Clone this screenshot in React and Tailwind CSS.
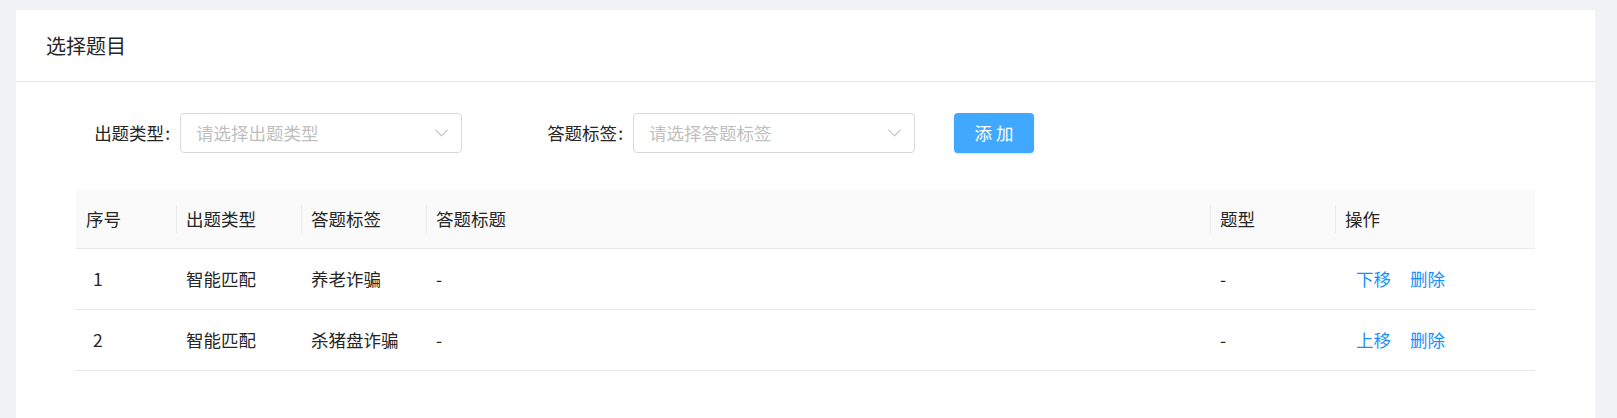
import React from "react";

const font = { fontFamily: '"Noto Sans CJK SC", "Noto Sans", sans-serif' };

const rows = [
  { no: "1", type: "智能匹配", tag: "养老诈骗", title: "-", kind: "-", move: "下移" },
  { no: "2", type: "智能匹配", tag: "杀猪盘诈骗", title: "-", kind: "-", move: "上移" },
];

const cols = "grid grid-cols-[100px_125px_125px_1fr_125px_200px]";

function Chevron() {
  return (
    <svg width="13" height="8" viewBox="0 0 13 8" className="shrink-0">
      <polyline points="0.5,0.8 6.5,6.8 12.5,0.8" fill="none" stroke="#bfbfbf" strokeWidth="1.1" />
    </svg>
  );
}

function FormSelect({ label, placeholder }) {
  return (
    <div className="flex items-center">
      <div className="w-[104px] pr-[10px] text-right text-[17.5px] leading-none text-[#262626] whitespace-nowrap">
        {label}
        <span className="ml-[1px]">:</span>
      </div>
      <div className="flex h-[40px] w-[282px] items-center justify-between rounded-[4px] border border-[#d9d9d9] bg-white pl-[15px] pr-[13px]">
        <span className="text-[17.5px] leading-none text-[#bfbfbf]">{placeholder}</span>
        <Chevron />
      </div>
    </div>
  );
}

function HeadCell({ children, first }) {
  return (
    <div className="relative flex h-full items-center px-[10px]">
      {!first && <span className="absolute left-0 top-1/2 h-[28px] w-px -translate-y-1/2 bg-[#ebebeb]" />}
      {children}
    </div>
  );
}

export default function App() {
  return (
    <div className="h-[418px] bg-[#f0f2f5] pl-4 pr-[22px] pt-[10px]" style={font}>
      <div className="h-full bg-white">
        <div className="flex h-[72px] items-center border-b border-[#e8e8e8] px-[30px] text-[20px] text-[#262626]">
          选择题目
        </div>

        <div className="px-[60px] pt-[31px]">
          <div className="flex items-center">
            <FormSelect label="出题类型" placeholder="请选择出题类型" />
            <div className="ml-[67px]">
              <FormSelect label="答题标签" placeholder="请选择答题标签" />
            </div>
            <button className="ml-[39px] flex h-[40px] w-[80px] items-center justify-center rounded-[4px] bg-[#40a9ff] text-[17.5px] leading-none tracking-[4px] text-white shadow-sm">
              <span className="pl-[4px]">添加</span>
            </button>
          </div>

          <div className="mt-[37px] text-[17.5px] text-[#262626]">
            <div className={`${cols} h-[59px] items-center border-b border-[#e8e8e8] bg-[#fafafa]`}>
              <HeadCell first>序号</HeadCell>
              <HeadCell>出题类型</HeadCell>
              <HeadCell>答题标签</HeadCell>
              <HeadCell>答题标题</HeadCell>
              <HeadCell>题型</HeadCell>
              <HeadCell>操作</HeadCell>
            </div>
            {rows.map((r) => (
              <div key={r.no} className={`${cols} h-[61px] items-center border-b border-[#e8e8e8]`}>
                <div className="pl-[17px]">{r.no}</div>
                <div className="px-[10px]">{r.type}</div>
                <div className="px-[10px]">{r.tag}</div>
                <div className="px-[10px]">{r.title}</div>
                <div className="px-[10px]">{r.kind}</div>
                <div className="flex pl-[21px] text-[#1890ff]">
                  <span>{r.move}</span>
                  <span className="ml-[19px]">删除</span>
                </div>
              </div>
            ))}
          </div>
        </div>
      </div>
    </div>
  );
}
